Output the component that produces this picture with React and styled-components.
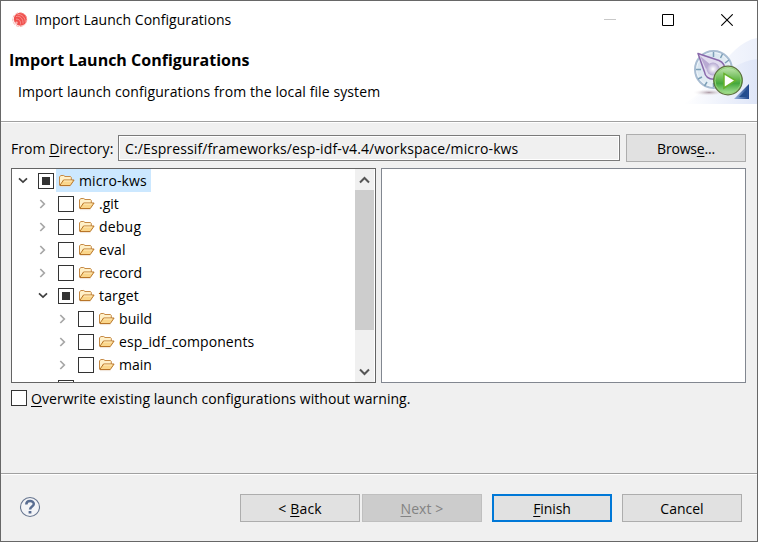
import React from "react";
import styled, { createGlobalStyle } from "styled-components";

const GlobalStyle = createGlobalStyle`
  * { box-sizing: border-box; }
  body { margin: 0; background: #fff; }
  svg { display: block; flex: none; }
  u { text-decoration: underline; text-decoration-thickness: 1px; text-underline-offset: 2px; text-decoration-skip-ink: none; }
`;

const Dialog = styled.main`
  width: 758px;
  height: 542px;
  display: flex;
  flex-direction: column;
  border: 1px solid #676767;
  background: #f0f0f0;
  color: #000;
  font: 14px/20px "Open Sans", "Noto Sans", sans-serif;
  overflow: hidden;
`;

const Text = styled.span`
  white-space: pre;
  letter-spacing: ${(p) => p.$track || 0}px;
`;

const TitleBar = styled.header`
  height: 37px;
  flex: none;
  display: flex;
  align-items: center;
  background: #fff;
  padding-left: 11px;
  gap: 7px;
`;

const WindowControls = styled.div`
  margin-left: auto;
  margin-right: 1px;
  display: flex;
`;

const ControlButton = styled.button`
  width: 58.5px;
  height: 36px;
  padding: 0;
  border: 0;
  background: none;
  display: grid;
  place-items: center;
`;

const Banner = styled.section`
  height: 83px;
  flex: none;
  display: flex;
  justify-content: space-between;
  background: #fff;
`;

const BannerText = styled.div`
  padding: 12px 0 0 8px;
`;

const Heading = styled.h1`
  margin: 0;
  font-size: 16px;
  line-height: 20px;
  font-weight: 700;
`;

const Description = styled.p`
  margin: 12px 0 0 9px;
`;

const Divider = styled.div`
  height: 2px;
  flex: none;
  background: #fff;
  border-top: 1px solid #a0a0a0;
`;

const Content = styled.section`
  height: 350px;
  flex: none;
  padding: 11px 11px 0 10px;
`;

const DirectoryRow = styled.div`
  display: flex;
  align-items: center;
  height: 28px;
`;

const DirectoryLabel = styled.label`
  width: 107px;
  padding-top: 2px;
`;

const PathField = styled.div`
  width: 502px;
  height: 26px;
  margin-right: 6px;
  padding: 3px 6px 1px;
  border: 1px solid #7a7a7a;
  box-shadow: inset 0 0 0 1px #fff;
`;

const Button = styled.button`
  width: 120px;
  height: 28px;
  padding: 1px 0 0;
  font: inherit;
  color: ${(p) => (p.disabled ? "#838383" : "#000")};
  background: ${(p) => (p.disabled ? "#ccc" : "#e1e1e1")};
  border: ${(p) => (p.$primary ? "2px solid #0078d7" : "1px solid " + (p.disabled ? "#bfbfbf" : "#adadad"))};
`;

const Panes = styled.div`
  display: grid;
  grid-template-columns: 365px 365px;
  gap: 5px;
  height: 215px;
  margin-top: 6px;
`;

const Pane = styled.div`
  display: flex;
  overflow: hidden;
  background: #fff;
  border: 1px solid ${(p) => (p.$active ? "#646464" : "#828790")};
`;

const TreeList = styled.ul`
  flex: 1;
  margin: 0;
  padding: 0;
  list-style: none;
  overflow: hidden;
`;

const TreeRow = styled.li`
  height: 23px;
  display: flex;
  align-items: center;
  padding-left: ${(p) => 2 + p.$level * 20}px;
`;

const Twisty = styled.span`
  width: 17px;
  height: 23px;
  margin-right: 7px;
  display: grid;
  place-items: center;
`;

const Check = styled.span`
  width: 16px;
  height: 16px;
  flex: none;
  margin-top: ${(p) => (p.$tree ? 1 : 0)}px;
  background: #fff;
  border: 1px solid #333;
  display: grid;
  place-items: center;
  &::after {
    content: "";
    width: 8px;
    height: 8px;
    background: ${(p) => (p.$partial ? "#333" : "transparent")};
  }
`;

const NodeLabel = styled.span`
  height: 23px;
  margin-left: 2px;
  padding: 0 4px 0 3px;
  display: flex;
  align-items: center;
  gap: 4px;
  background: ${(p) => (p.$selected ? "#cce8ff" : "transparent")};
`;

const Scrollbar = styled.div`
  width: 20px;
  flex: none;
  display: flex;
  flex-direction: column;
  background: #f0f0f0;
  border-right: 1px solid #fff;
`;

const ScrollArrow = styled.div`
  height: 21px;
  display: grid;
  place-items: center;
`;

const ScrollThumb = styled.div`
  height: 140px;
  margin-bottom: 31px;
  background: #cdcdcd;
`;

const OverwriteOption = styled.label`
  display: flex;
  align-items: center;
  gap: 4px;
  height: 20px;
  margin-top: 5px;
  ${Text} {
    padding-top: 2px;
  }
`;

const Footer = styled.footer`
  flex: 1;
  display: flex;
  align-items: flex-start;
  padding: 19px 15px 0 18px;
`;

const HelpButton = styled.span`
  padding-top: 2px;
  margin-right: auto;
`;

const ButtonGroup = styled.div`
  display: flex;
  gap: ${(p) => p.$gap}px;
`;

function AppIcon() {
  return (
    <svg width="16" height="16" viewBox="0 0 16 16">
      <circle cx="8.4" cy="7.2" r="6.5" fill="#f0504d" />
      <circle cx="7.8" cy="7.600" r="7" fill="none" stroke="#f7a9a6" strokeWidth=".9" strokeDasharray="3 1" />
      <g fill="none" stroke="#f9a09d" strokeWidth=".8">
        <path d="M4 4.600c4-1.500 7.500 2.500 7 7M5.500 2.600c4.500-.8 8 3.500 7.800 7.800M4 7.200c3-.5 5 2 4.500 5.200" />
      </g>
      <circle cx="4.500" cy="10.800" r="1.200" fill="#fff" opacity=".6" />
    </svg>
  );
}

function Twist({ open }) {
  return open ? (
    <svg width="10" height="7" viewBox="0 0 10 7">
      <path d="M1 1.300 5 5.100 9 1.300" fill="none" stroke="#404040" strokeWidth="1.700" />
    </svg>
  ) : (
    <svg width="7" height="10" viewBox="0 0 7 10">
      <path d="M1.300 1 5.300 5 1.300 9" fill="none" stroke="#a6a6a6" strokeWidth="1.700" />
    </svg>
  );
}

function FolderIcon() {
  return (
    <svg width="16" height="14" viewBox="0 0 16 14">
      <path d="M.5 11V3l1.200-1.500h3L6 2.500h5.500l.8 1V6" fill="#fff0c8" stroke="#c68a45" />
      <path d="M.8 11.500 4.500 6h10.600l-3.800 5.500z" fill="#fad68b" stroke="#b87528" strokeLinejoin="round" />
      <path d="M5 7h8.200" stroke="#ffecc0" />
      <path d="M1 12.600h10.500" stroke="#e9d9c5" strokeWidth=".7" />
    </svg>
  );
}

function ScrollChevron({ down }) {
  return (
    <svg width="11" height="8" viewBox="0 0 11 8">
      <path d={down ? "M1 1.500 5.500 6 10 1.500" : "M1 6.500 5.500 2 10 6.500"} fill="none" stroke="#555" strokeWidth="2" />
    </svg>
  );
}

function BannerArt() {
  return (
    <svg width="75" height="66" viewBox="682 38 75 66">
      <defs>
        <linearGradient id="backdrop" x1="0" x2="1">
          <stop offset="0" stopColor="#fff" />
          <stop offset="1" stopColor="#dfe6f8" />
        </linearGradient>
        <linearGradient id="dial" x1="0" y1="0" x2="1" y2="1">
          <stop offset="0" stopColor="#d0dfeb" />
          <stop offset="1" stopColor="#f2f8fc" />
        </linearGradient>
        <linearGradient id="play" x1="0" y1="0" x2="0" y2="1">
          <stop offset="0" stopColor="#c9eab8" />
          <stop offset=".45" stopColor="#68b851" />
          <stop offset=".6" stopColor="#43a73c" />
          <stop offset="1" stopColor="#b6e9a2" />
        </linearGradient>
        <radialGradient id="knob">
          <stop offset="0" stopColor="#fff" />
          <stop offset="1" stopColor="#b5a8d1" />
        </radialGradient>
        <radialGradient id="shadow">
          <stop offset="0" stopColor="#ad9ba6" />
          <stop offset="1" stopColor="#fff" stopOpacity="0" />
        </radialGradient>
        <linearGradient id="corner">
          <stop offset="0" stopColor="#9bb7df" />
          <stop offset="1" stopColor="#1e458c" />
        </linearGradient>
      </defs>
      <path d="M682 104C712 94 724 44 757 38V104Z" fill="url(#backdrop)" opacity=".6" />
      <path d="M684 104C710 96 723 63 757 59V104Z" fill="url(#backdrop)" />
      <ellipse cx="709" cy="92.500" rx="17" ry="3.500" fill="url(#shadow)" />
      <circle cx="713.500" cy="69.500" r="18.500" fill="url(#dial)" stroke="#a9bdd2" strokeWidth="2" />
      <circle cx="713.500" cy="69.500" r="16.800" fill="none" stroke="#eff6fb" />
      <path d="M713.500 52v5M722.500 54l-2 4M729 60l-4 3M696 69.500h5M698 79l4-2M704.500 86l2.500-4M713.500 87v-4" stroke="#7c9fb7" strokeWidth="1.500" />
      <path d="M698 53.500 719 60.500C727 64 727 77 716 79C708 80 705 76 704.500 72Z" fill="#e1dcef" stroke="#8969ab" strokeWidth="1.500" strokeLinejoin="round" />
      <path d="M700 56 711 65 706 69Z" fill="#b9aad3" />
      <circle cx="713" cy="69" r="6.500" fill="url(#knob)" />
      <path d="M749 84v15h-15Z" fill="url(#corner)" />
      <path d="M747 89v8h-8Z" fill="#244d8e" />
      <circle cx="728" cy="80.500" r="14.300" fill="url(#play)" stroke="#5c713d" strokeWidth="1.200" />
      <circle cx="728" cy="80.500" r="13" fill="none" stroke="#91d276" />
      <path d="M724 73.500v14.500L735.500 80.500Z" fill="#fff" stroke="#66b32d" strokeWidth="1.500" />
    </svg>
  );
}

function HelpIcon() {
  return (
    <svg width="22" height="22" viewBox="0 0 22 22">
      <circle cx="11" cy="11" r="9.500" fill="#f3f4f7" stroke="#66758f" strokeWidth="1.100" />
      <path d="M7.300 8.400C7.300 3.800 14.800 4 14.800 7.900C14.800 10.600 11.100 10.300 11.100 13.500" fill="none" stroke="#596d91" strokeWidth="2.500" />
      <path d="M11 15v2.500" stroke="#596d91" strokeWidth="2.800" />
    </svg>
  );
}

const nodes = [
  { name: "micro-kws", level: 0, open: true, partial: true, selected: true, track: 0.12 },
  { name: ".git", level: 1 },
  { name: "debug", level: 1, track: 0.2 },
  { name: "eval", level: 1, track: 0.1 },
  { name: "record", level: 1 },
  { name: "target", level: 1, open: true, partial: true, track: 0.15 },
  { name: "build", level: 2, track: 0.1 },
  { name: "esp_idf_components", level: 2, track: 0.07 },
  { name: "main", level: 2 },
  { name: "", level: 1 },
];

export default function App() {
  return (
    <>
      <GlobalStyle />
      <Dialog>
        <TitleBar>
          <AppIcon />
          <Text $track={0.03}>Import Launch Configurations</Text>
          <WindowControls>
            <ControlButton aria-label="Minimize" disabled>
              <svg width="12" height="12" viewBox="0 0 12 12"><path d="M0 5.500h12" stroke="#c8c8c8" /></svg>
            </ControlButton>
            <ControlButton aria-label="Maximize">
              <svg width="12" height="12" viewBox="0 0 12 12"><path d="M.5.5h11v11H.5z" fill="none" stroke="#000" /></svg>
            </ControlButton>
            <ControlButton aria-label="Close">
              <svg width="12" height="12" viewBox="0 0 12 12"><path d="m.3.3 11.400 11.400m0-11.400L.3 11.700" stroke="#000" strokeWidth="1.100" /></svg>
            </ControlButton>
          </WindowControls>
        </TitleBar>
        <Banner>
          <BannerText>
            <Heading>Import Launch Configurations</Heading>
            <Description><Text $track={0.1}>Import launch configurations from the local file system</Text></Description>
          </BannerText>
          <BannerArt />
        </Banner>
        <Divider />
        <Content>
          <DirectoryRow>
            <DirectoryLabel><Text $track={0.04}>From <u>D</u>irectory:</Text></DirectoryLabel>
            <PathField><Text $track={0.12}>C:/Espressif/frameworks/esp-idf-v4.4/workspace/micro-kws</Text></PathField>
            <Button><Text $track={-0.2}>Brows<u>e</u>...</Text></Button>
          </DirectoryRow>
          <Panes>
            <Pane $active>
              <TreeList>
                {nodes.map((n, i) => (
                  <TreeRow key={i} $level={n.level}>
                    <Twisty>{n.name && <Twist open={n.open} />}</Twisty>
                    <Check $tree $partial={n.partial} />
                    {n.name && (
                      <NodeLabel $selected={n.selected}>
                        <FolderIcon />
                        <Text $track={n.track}>{n.name}</Text>
                      </NodeLabel>
                    )}
                  </TreeRow>
                ))}
              </TreeList>
              <Scrollbar>
                <ScrollArrow><ScrollChevron /></ScrollArrow>
                <ScrollThumb />
                <ScrollArrow><ScrollChevron down /></ScrollArrow>
              </Scrollbar>
            </Pane>
            <Pane />
          </Panes>
          <OverwriteOption>
            <Check />
            <Text $track={0.05}><u>O</u>verwrite existing launch configurations without warning.</Text>
          </OverwriteOption>
        </Content>
        <Divider />
        <Footer>
          <HelpButton><HelpIcon /></HelpButton>
          <ButtonGroup $gap={10}>
            <ButtonGroup $gap={2}>
              <Button><Text $track={0.2}>&lt; <u>B</u>ack</Text></Button>
              <Button disabled><Text $track={0.1}><u>N</u>ext &gt;</Text></Button>
            </ButtonGroup>
            <Button $primary><Text $track={-0.1}><u>F</u>inish</Text></Button>
            <Button><Text>Cancel</Text></Button>
          </ButtonGroup>
        </Footer>
      </Dialog>
    </>
  );
}
